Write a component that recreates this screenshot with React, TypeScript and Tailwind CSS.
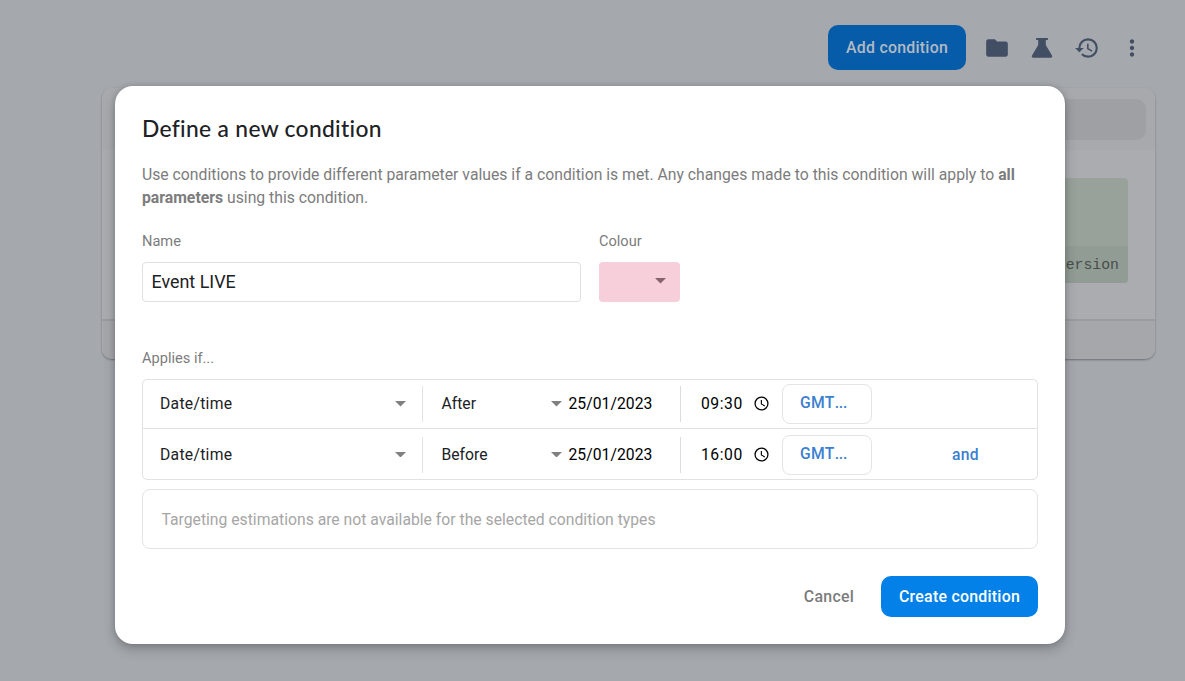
import type { ReactNode } from 'react';

function Caret({ className }: { className: string }) {
  return (
    <svg viewBox="0 0 10 5" className={`h-[5.5px] w-[11px] shrink-0 ${className}`} fill="currentColor" preserveAspectRatio="none">
      <path d="M0 0h10L5 5z" />
    </svg>
  );
}

function Icon({ children, className = '' }: { children: ReactNode; className?: string }) {
  return (
    <svg viewBox="0 0 24 24" className={`size-[26px] shrink-0 text-[#414e64] ${className}`} fill="currentColor">
      {children}
    </svg>
  );
}

function Toolbar() {
  return (
    <header className="flex h-[45px] items-center pr-10">
      <button className="ml-auto h-[45px] w-[138px] rounded-[10px] bg-[#065ca8] pt-px text-[15.9px] font-medium tracking-[0.25px] text-[#b2bac4]">
        Add condition
      </button>
      <Icon className="ml-[18px]">
        <path d="M10 4H4c-1.1 0-1.99.9-1.99 2L2 18c0 1.1.9 2 2 2h16c1.1 0 2-.9 2-2V8c0-1.1-.9-2-2-2h-8l-2-2z" />
      </Icon>
      <Icon className="ml-[19px]">
        <path d="M6.6 2.7h10.800v1.800h-1.900v4.800l5.700 9.700c.7 1.200 0 2-1.200 2H4c-1.200 0-1.900-.8-1.200-2l5.700-9.700V4.500H6.600z" />
      </Icon>
      <Icon className="ml-[19px]">
        <path d="M13 3a9 9 0 0 0-9 9H1l3.890 3.890.070.140L9 12H6c0-3.870 3.130-7 7-7s7 3.130 7 7-3.130 7-7 7c-1.930 0-3.680-.790-4.940-2.060l-1.420 1.420A8.954 8.954 0 0 0 13 21a9 9 0 0 0 0-18zm-1 5v5l4.280 2.540.720-1.210-3.500-2.080V8H12z" />
      </Icon>
      <Icon className="ml-[19px]">
        <path d="M12 8c1.100 0 2-.900 2-2s-.900-2-2-2-2 .900-2 2 .900 2 2 2zm0 2c-1.100 0-2 .900-2 2s.900 2 2 2 2-.900 2-2-.900-2-2-2zm0 6c-1.100 0-2 .900-2 2s.900 2 2 2 2-.900 2-2-.900-2-2-2z" />
      </Icon>
    </header>
  );
}

function ParameterCard() {
  return (
    <section className="mt-[18px] mr-[30px] ml-[102px] flex h-[271px] flex-col overflow-hidden rounded-[10px] bg-[#abacb0] shadow-[0_1px_2px_rgba(50,55,65,0.5)]">
      <div className="flex h-[62px] justify-end bg-[#a7a9ad] pt-[11px] pr-[9px]">
        <div className="h-[41px] w-[200px] rounded-[10px] bg-[#9fa0a4]" />
      </div>
      <div className="flex h-[169px] justify-end pt-7 pr-[27px]">
        <div className="flex h-[105px] w-[200px] flex-col overflow-hidden rounded-[4px] bg-[#98a29b]">
          <div className="mt-[68px] flex h-[37px] items-center justify-end bg-[#919c94] pt-[2px] pr-[9px] font-['Liberation_Mono',monospace] text-[14.8px] text-[#474d4a]">
            ersion
          </div>
        </div>
      </div>
      <div className="flex-1 border-t-2 border-[#999ba0] bg-[#a6a7ab]" />
    </section>
  );
}

function ConditionRow({ operator, time, children }: { operator: string; time: string; children?: ReactNode }) {
  return (
    <div className="flex flex-1 items-center text-[15.7px] text-[#202124]">
      <div className="flex h-9 w-[280px] items-center justify-between border-r border-[#e2e2e2] pr-4 pl-[17px] tracking-[0.29px]">
        Date/time
        <Caret className="text-[#808080]" />
      </div>
      <div className="flex w-[139px] items-center justify-between pl-[18.5px]">
        {operator}
        <Caret className="text-[#808080]" />
      </div>
      <div className="flex h-9 w-[119px] items-center border-r border-[#dcdcdc] pl-[6.5px] tracking-[0.04px] text-black">25/01/2023</div>
      <div className="flex w-[101px] items-center pl-5 text-black">
        <span className="w-[41px] overflow-hidden tracking-[0.55px]">{time}</span>
        <svg viewBox="0 0 24 24" className="ml-[11px] size-[17px]" fill="currentColor">
          <path d="M12 2a10 10 0 1 0 0 20 10 10 0 0 0 0-20zm0 18.200a8.200 8.200 0 1 1 0-16.400 8.200 8.200 0 0 1 0 16.400zM12.600 7H11v6l5.200 3.100.8-1.300-4.400-2.600V7z" />
        </svg>
      </div>
      <button className="h-10 w-[90px] rounded-lg border border-[#e4e4e4] pb-[2px] pl-[17px] text-left font-medium tracking-[0.3px] text-[#3a7fd0]">
        GMT<span className="tracking-[-0.2px]">...</span>
      </button>
      <div className="ml-20 font-medium tracking-[0.3px] text-[#3a7fd0]">{children}</div>
    </div>
  );
}

function ConditionDialog() {
  return (
    <div
      role="dialog"
      className="h-[558px] w-[950px] rounded-[18px] bg-white px-[27px] pt-6 shadow-[0_5px_12px_rgba(40,40,40,0.3),0_0_5px_rgba(50,50,50,0.2)]"
    >
      <h1 className="h-9 font-['Lato',sans-serif] text-[22.8px] leading-9 font-medium tracking-[0.32px] text-[#202124]">
        Define a new condition
      </h1>
      <p className="mt-[16.5px] h-[46px] text-[15.75px] leading-[23px] text-[#7c7c7c]">
        Use conditions to provide different parameter values if a condition is met. Any changes made to this condition will apply to{' '}
        <b className="font-bold">all parameters</b> using this condition.
      </p>
      <div className="mt-[22.5px] flex gap-[18px] text-[14.6px] text-[#7c7c7c]">
        <label className="w-[439px] leading-5">
          Name
          <input
            defaultValue="Event LIVE"
            className="mt-[11px] block h-10 w-full rounded border border-[#e0e0e0] px-[8.5px] pb-[2px] text-[17.9px] text-[#202124] outline-none"
          />
        </label>
        <div className="leading-5">
          Colour
          <button className="mt-[11px] flex h-10 w-[81px] items-center justify-end rounded bg-[#f6cfdb] pr-[14px] pb-0.5">
            <Caret className="text-[#85646f]" />
          </button>
        </div>
      </div>
      <div className="mt-[46px] text-[14.6px] leading-5 text-[#7c7c7c]">Applies if...</div>
      <div className="mt-[11px] flex h-[101px] flex-col rounded-[5px] border border-[#e2e2e2]">
        <div className="flex h-[49px] border-b border-[#e2e2e2]">
          <ConditionRow operator="After" time="09:30" />
        </div>
        <div className="flex h-[50px] pt-px">
          <ConditionRow operator="Before" time="16:00">
            and
          </ConditionRow>
        </div>
      </div>
      <div className="mt-[9px] flex h-[60px] items-center rounded-lg border border-[#e4e4e4] pt-px pl-[18.5px] text-[15.72px] text-[#a6a6a6]">
        Targeting estimations are not available for the selected condition types
      </div>
      <div className="mt-[27px] flex items-center justify-end gap-[27px] text-[15.9px] font-medium tracking-[0.25px]">
        <button className="text-[#7c7c7c]">Cancel</button>
        <button className="h-[41px] w-[157px] rounded-[10px] bg-[#0381e8] text-white">Create condition</button>
      </div>
    </div>
  );
}

export default function App() {
  return (
    <div className="relative h-[681px] w-full overflow-hidden bg-[#a5a9ae] pt-[25px] font-['Roboto',sans-serif]">
      <Toolbar />
      <ParameterCard />
      <div className="absolute inset-0 flex items-start pt-[86px] pl-[115px]">
        <ConditionDialog />
      </div>
    </div>
  );
}
